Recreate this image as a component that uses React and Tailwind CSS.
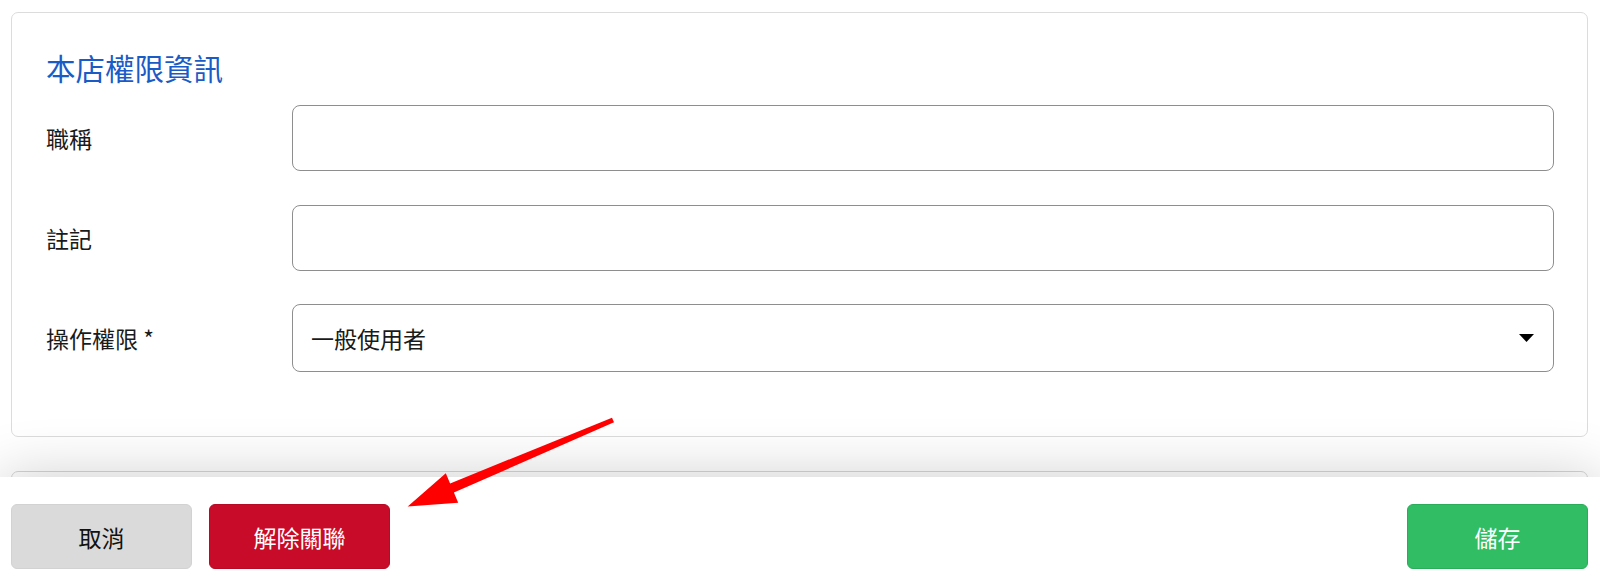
import React from "react";

function Field({ label, children, h }) {
  return (
    <div className={`flex items-center ${h}`}>
      <div className="w-[246px] shrink-0 text-[23px] leading-[30px] text-[#1a1a1a]">{label}</div>
      <div className="flex-1 h-full">{children}</div>
    </div>
  );
}

export default function App() {
  return (
    <div className="relative w-[1600px] h-[578px] overflow-hidden bg-white font-['Noto_Sans_CJK_TC','Noto_Sans',sans-serif] flex flex-col">
      <div className="flex-1 min-h-0 overflow-hidden pt-[12px] pl-[11px] pr-[12px]">
        <div className="border border-[#dcdcdc] rounded-[7px] bg-white pt-[36px] pb-[64px] pl-[34px] pr-[33px]">
          <div className="h-[36px] text-[29.5px] leading-[36px] text-[#1a5bc6]">本店權限資訊</div>
          <div className="mt-[20px] flex flex-col">
            <Field label="職稱" h="h-[66px]">
              <input type="text" className="w-full h-full border border-[#8e8e8e] rounded-[8px] bg-white px-[18px] text-[23px] outline-none" />
            </Field>
            <div className="h-[34px]" />
            <Field label="註記" h="h-[66px]">
              <input type="text" className="w-full h-full border border-[#8e8e8e] rounded-[8px] bg-white px-[18px] text-[23px] outline-none" />
            </Field>
            <div className="h-[33px]" />
            <Field label="操作權限 *" h="h-[68px]">
              <div className="w-full h-full border border-[#8e8e8e] rounded-[8px] bg-white pl-[18px] pr-[19px] flex items-center justify-between">
                <span className="text-[23px] leading-[30px] text-[#1a1a1a]">一般使用者</span>
                <svg width="15" height="8" viewBox="0 0 15 8" className="block">
                  <polygon points="0,0 15,0 7.5,8" fill="#000" />
                </svg>
              </div>
            </Field>
          </div>
        </div>
        <div className="mt-[34px] h-[200px] border border-[#d6d6d6] rounded-[7px] bg-white" />
      </div>
      <div className="relative z-10 h-[101px] shrink-0 bg-white shadow-[0_0_60px_rgba(0,0,0,0.2)] pt-[27px] pl-[11px] pr-[12px] flex items-start">
        <button className="w-[181px] h-[65px] rounded-[6px] bg-[#dadada] border border-[#d2d2d2] text-[23px] leading-[30px] text-[#111]">取消</button>
        <button className="ml-[17px] w-[181px] h-[65px] rounded-[6px] bg-[#c70b28] border border-[#b80a25] text-[23px] leading-[30px] text-white">解除關聯</button>
        <div className="flex-1" />
        <button className="w-[181px] h-[65px] rounded-[6px] bg-[#30bd63] border border-[#29ad58] text-[23px] leading-[30px] text-white">儲存</button>
      </div>
      <svg className="absolute inset-0 z-20 pointer-events-none" width="1600" height="578" viewBox="0 0 1600 578">
        <polygon
          points="612,417.7 614,422.3 453.9,492.6 458.2,502.8 407.7,506.6 445.8,473.2 450.1,483.4"
          fill="#ff0000"
        />
      </svg>
    </div>
  );
}
